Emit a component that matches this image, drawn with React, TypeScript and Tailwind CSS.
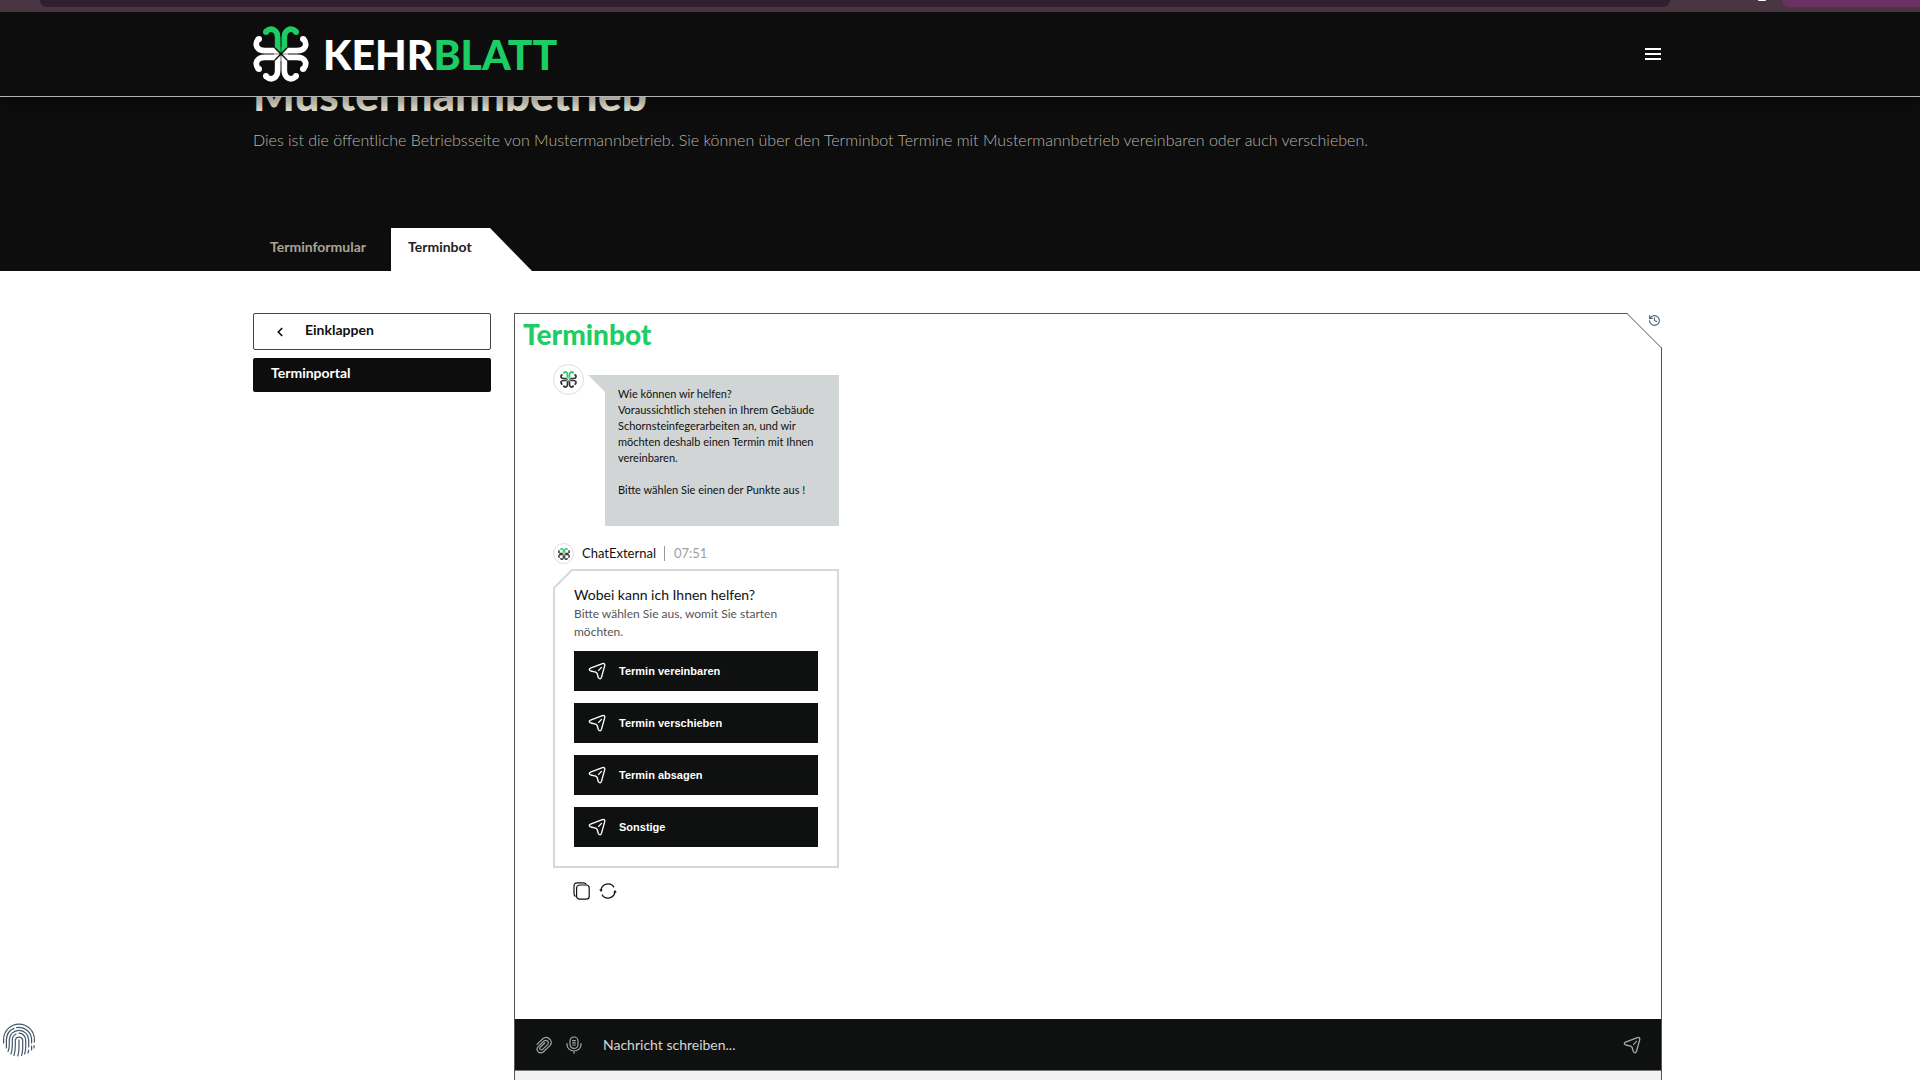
import { useState } from "react"
import { ChevronLeft, History } from "lucide-react"

const options = ["Termin vereinbaren", "Termin verschieben", "Termin absagen", "Sonstige"]

// One half of a clover leaf, mirrored and rotated to build the whole mark
const HalfLeaf = ({ transform }: { transform: string }) => (
  <g transform={transform}>
    <path d="M1 -4 L18 -21 H1 Z" fill="currentColor" />
    <path d="M10 -20 V-48 C10 -72 28 -82 46 -67" fill="none" stroke="currentColor" strokeWidth="17" />
    <circle cx="45" cy="-66" r="9" fill="currentColor" />
  </g>
)

const Leaf = ({ angle, className }: { angle: number; className?: string }) => (
  <g className={className}>
    <HalfLeaf transform={`rotate(${angle})`} />
    <HalfLeaf transform={`rotate(${angle}) scale(-1 1)`} />
  </g>
)

const Clover = ({ className }: { className: string }) => (
  <svg viewBox="-84 -84 168 168" className={className} aria-hidden="true">
    <Leaf angle={90} />
    <Leaf angle={180} />
    <Leaf angle={270} />
    <Leaf angle={0} className="text-[#1bcd62]" />
  </svg>
)

const SendIcon = ({ className }: { className: string }) => (
  <svg
    viewBox="0 0 24 24"
    className={className}
    fill="none"
    stroke="currentColor"
    strokeWidth="1.8"
    strokeLinecap="round"
    strokeLinejoin="round"
    aria-hidden="true"
  >
    <path d="M3.4 8.2 L19.2 2.2 Q22.9 1.2 22.3 4.8 L18 20.4 Q16.4 24.2 13.8 20.8 L12.3 15.6 Q11.8 14 10.3 13.5 L3.8 12 Q-.2 10.2 3.4 8.2 Z" />
    <path d="M14.2 11.2 L18 7.2" />
  </svg>
)

const ClipIcon = () => (
  <svg
    viewBox="0 0 18 18"
    className="size-[18px]"
    fill="none"
    stroke="currentColor"
    strokeWidth="1.2"
    strokeLinecap="round"
    aria-hidden="true"
  >
    <path d="M2 8.4 L7.8 2.7 Q10.6 .4 13.4 2 L15.4 4 Q17.4 6.8 15 9.6 L8.2 16 Q5.6 18 3.2 15.8 Q.8 13.2 3.2 10.6 L9.2 4.8 Q11 3.6 12.6 5.2 Q14 7 12.6 8.6 L7.4 13.6 Q6.2 14.4 5.2 13.4 Q4.2 12.2 5.2 11.2 L10 6.8" />
  </svg>
)

const MicIcon = () => (
  <svg
    viewBox="0 0 18 18"
    className="size-[18px]"
    fill="none"
    stroke="currentColor"
    strokeWidth="1.2"
    strokeLinecap="round"
    aria-hidden="true"
  >
    <rect x="5" y="1" width="8" height="11.4" rx="4" />
    <path d="M2 7.6 V8.4 A7 6.6 0 0 0 16 8.4 V7.6 M9 15 V17.2 M7.6 4.6 H10.4 M7.6 6.8 H10.4 M7.6 9 H10.4" />
  </svg>
)

const CopyIcon = () => (
  <svg viewBox="0 0 18 18" className="size-[18px]" fill="none" stroke="currentColor" strokeWidth="1.2" aria-hidden="true">
    <rect x="3.6" y="3" width="12.6" height="14.2" rx="3" />
    <path d="M2.6 14.6 Q1 13.6 1 11.6 V4.2 Q1 .8 4.4 .8 H10.4 Q12.6 .8 13.4 2.4" />
  </svg>
)

const RefreshIcon = () => (
  <svg viewBox="0 0 18 18" className="size-[18px]" fill="none" stroke="currentColor" strokeWidth="1.2" aria-hidden="true">
    <path d="M2 8.6 A7 7 0 0 1 15 5.4 M16 9.4 A7 7 0 0 1 3 12.6" />
    <path d="M.2 7.6 H3.8 L2 10 Z M14.2 10.4 H17.8 L16 8 Z" fill="currentColor" stroke="none" />
  </svg>
)

const FingerprintIcon = () => (
  <svg
    viewBox="0 0 34 34"
    className="size-[34px]"
    fill="none"
    stroke="currentColor"
    strokeWidth="1.2"
    strokeLinecap="round"
    aria-hidden="true"
  >
    <path d="M1.6 20 V16.5 A15.4 15.4 0 0 1 32.4 16.5 V19" />
    <path d="M4.4 25 V17 A12.6 12.6 0 0 1 12 5.4 M14.6 4.6 A12.6 12.6 0 0 1 29.6 17 V20 M32 22.5 V25" />
    <path d="M6 28.5 Q7.3 26 7.3 22 V17 A9.7 9.7 0 0 1 26.7 17 V24 M29.6 23 V27" />
    <path d="M9 31 Q10.3 27 10.3 22 V17 A6.8 6.8 0 0 1 14 11 M17 10.2 A6.8 6.8 0 0 1 23.7 17 V24 Q23.7 28 22.6 31" />
    <path d="M12 32.5 Q13.3 28 13.3 23 V17 A3.8 3.8 0 0 1 20.7 17 V25 Q20.7 29 19.6 32.5" />
    <path d="M17 17 V25 Q17 29 15.8 33 M26.7 27 L26 30" />
  </svg>
)

export default function App() {
  const [message, setMessage] = useState("")

  return (
    <div className="flex min-h-screen flex-col bg-white font-['Lato',sans-serif] text-[#0f1110]">
      {/* Browser bar */}
      <div className="flex h-3 items-start bg-[#4a3542] pl-10">
        <div className="h-[7px] w-[1630px] rounded-b-xl bg-[#301f2d]"></div>
        <div className="ml-[88px] h-px w-2 rounded-b-full bg-white"></div>
        <div className="ml-4 h-[7px] flex-1 rounded-bl-xl bg-[#6a3163]"></div>
      </div>

      {/* Header */}
      <header className="relative z-10 border-b border-[#b5b5b5] bg-[#0d0d0d] pr-[5px] shadow-[0_8px_8px_rgba(0,0,0,0.25)]">
        <div className="mx-auto flex h-[84px] max-w-[1409px] items-center justify-between">
          <a href="#" className="flex items-center gap-[14px] text-white">
            <Clover className="size-14" />
            <span className="text-[41px] leading-none font-black">
              KEHR<span className="text-[#1bcd62]">BLATT</span>
            </span>
          </a>
          <button type="button" aria-label="Menü" className="flex w-[18px] flex-col gap-[3px] px-px">
            <span className="h-[2px] w-full bg-white"></span>
            <span className="h-[2px] w-full bg-white"></span>
            <span className="h-[2px] w-full bg-white"></span>
          </button>
        </div>
      </header>

      {/* Hero */}
      <div className="bg-[#0d0d0d] pr-[5px]">
        <div className="mx-auto flex h-[174px] max-w-[1409px] flex-col justify-between">
          <div>
            <h1 className="-mt-[27px] text-[44px] leading-[48px] font-black text-[#dfdccb]">Mustermannbetrieb</h1>
            <p className="mt-[10px] text-[16px] leading-6 font-light text-[#b9b6a8]">
              Dies ist die öffentliche Betriebsseite von Mustermannbetrieb. Sie können über den Terminbot Termine mit
              Mustermannbetrieb vereinbaren oder auch verschieben.
            </p>
          </div>
          <nav className="flex h-[43px] text-[14px] font-bold">
            <a href="#formular" className="flex w-[138px] items-center pb-[6px] pl-[17px] text-[#aaa596]">
              Terminformular
            </a>
            <a
              href="#bot"
              className="flex w-[141px] items-center bg-white pb-[6px] pl-[17px] text-[#222] [clip-path:polygon(0_0,99px_0,100%_100%,0_100%)]"
            >
              Terminbot
            </a>
          </nav>
        </div>
      </div>

      {/* Content */}
      <main className="flex flex-1 flex-col pt-[42px] pr-[5px]">
        <div className="mx-auto flex w-full max-w-[1409px] flex-1 gap-[23px]">
          <aside className="flex w-[238px] flex-col gap-2 text-[14px] font-bold">
            <button type="button" className="flex h-[37px] items-center rounded-[2px] border border-[#444] pb-1 pl-[19px] text-left">
              <ChevronLeft className="mt-1 mr-[18px] size-[14px]" strokeWidth={3} />
              Einklappen
            </button>
            <button type="button" className="h-[34px] rounded-[2px] bg-[#0d0d0d] pb-[6px] pl-[18px] text-left text-white">
              Terminportal
            </button>
          </aside>

          <section className="relative flex flex-1 flex-col border border-b-0 border-[#555]">
            {/* Cut corner */}
            <svg viewBox="0 0 36 36" className="absolute -top-px -right-px size-9" aria-hidden="true">
              <path d="M1 0 H36 V35 Z" fill="#fff" />
              <path d="M.5 0 L36 35.5" fill="none" stroke="#555" />
            </svg>
            <button type="button" aria-label="Verlauf" className="absolute top-0 right-0 text-[#4b6273]">
              <History className="size-[13px]" />
            </button>

            <h2 className="mt-1 ml-2 text-[28px] leading-8 font-black text-[#1fcd64]">Terminbot</h2>

            <div className="flex flex-1 flex-col pl-[38px]">
              {/* Welcome message */}
              <div className="mt-[14px] flex gap-1">
                <div className="flex size-[31px] items-center justify-center rounded-full border border-[#ddd] text-[#333]">
                  <Clover className="size-[17px]" />
                </div>
                <div className="mt-[11px] h-[151px] w-[251px] bg-[#d1d5d5] pt-[11px] pl-[30px] text-[11px] leading-4 [clip-path:polygon(0_0,100%_0,100%_100%,17px_100%,17px_17px)]">
                  <p>
                    Wie können wir helfen?
                    <br />
                    Voraussichtlich stehen in Ihrem Gebäude
                    <br />
                    Schornsteinfegerarbeiten an, und wir
                    <br />
                    möchten deshalb einen Termin mit Ihnen
                    <br />
                    vereinbaren.
                  </p>
                  <p className="mt-4">Bitte wählen Sie einen der Punkte aus !</p>
                </div>
              </div>

              {/* Sender */}
              <div className="mt-[17px] flex h-[21px] items-center text-[13px]">
                <div className="flex size-[21px] items-center justify-center rounded-full border border-[#ddd] text-[#333]">
                  <Clover className="size-3" />
                </div>
                <span className="ml-2">ChatExternal</span>
                <span className="mx-2 h-[15px] w-px bg-[#999]"></span>
                <time className="ml-px text-[#a0a0a0]">07:51</time>
              </div>

              {/* Card */}
              <div className="relative mt-[5px] w-[286px] border-2 border-[#d5d9d9] px-[19px] pt-[14px] pb-[19px]">
                <svg viewBox="0 0 20 20" className="absolute -top-[2px] -left-[2px] size-5" aria-hidden="true">
                  <path d="M0 0 H20 L0 20 Z" fill="#fff" />
                  <path d="M19 1 L1 19" fill="none" stroke="#d5d9d9" strokeWidth="2" strokeLinecap="square" />
                </svg>
                <h3 className="text-[14px] leading-5">Wobei kann ich Ihnen helfen?</h3>
                <p className="text-[12px] leading-[18px] text-[#555]">
                  Bitte wählen Sie aus, womit Sie starten möchten.
                </p>
                <div className="mt-[10px] flex flex-col gap-3">
                  {options.map((option) => (
                    <button
                      key={option}
                      type="button"
                      className="flex h-10 items-center gap-[13px] bg-[#0f1110] pl-[14px] font-['Liberation_Sans',sans-serif] text-[11px] font-bold text-white"
                    >
                      <SendIcon className="size-[18px]" />
                      {option}
                    </button>
                  ))}
                </div>
              </div>

              {/* Actions */}
              <div className="mt-[14px] ml-5 flex gap-2">
                <button type="button" aria-label="Kopieren">
                  <CopyIcon />
                </button>
                <button type="button" aria-label="Neu laden">
                  <RefreshIcon />
                </button>
              </div>
            </div>

            {/* Message input */}
            <form className="flex h-[51px] items-center bg-[#0f1110] pr-5 pl-5 text-[#a5a8a7]" onSubmit={(e) => e.preventDefault()}>
              <button type="button" aria-label="Datei anhängen">
                <ClipIcon />
              </button>
              <button type="button" aria-label="Sprachnachricht" className="ml-3">
                <MicIcon />
              </button>
              <input
                type="text"
                aria-label="Nachricht"
                placeholder="Nachricht schreiben..."
                value={message}
                onChange={(e) => setMessage(e.target.value)}
                className="ml-5 flex-1 bg-transparent text-[14px] text-white outline-none placeholder:text-[#d5d5d5]"
              />
              <button type="submit" aria-label="Senden">
                <SendIcon className="size-[18px]" />
              </button>
            </form>
            <div className="h-[10px] border-t border-[#777] bg-[#f1f3f2]"></div>
          </section>
        </div>
      </main>

      <button type="button" aria-label="Datenschutz" className="fixed bottom-[23px] left-[2px] text-[#43586a]">
        <FingerprintIcon />
      </button>
    </div>
  )
}
